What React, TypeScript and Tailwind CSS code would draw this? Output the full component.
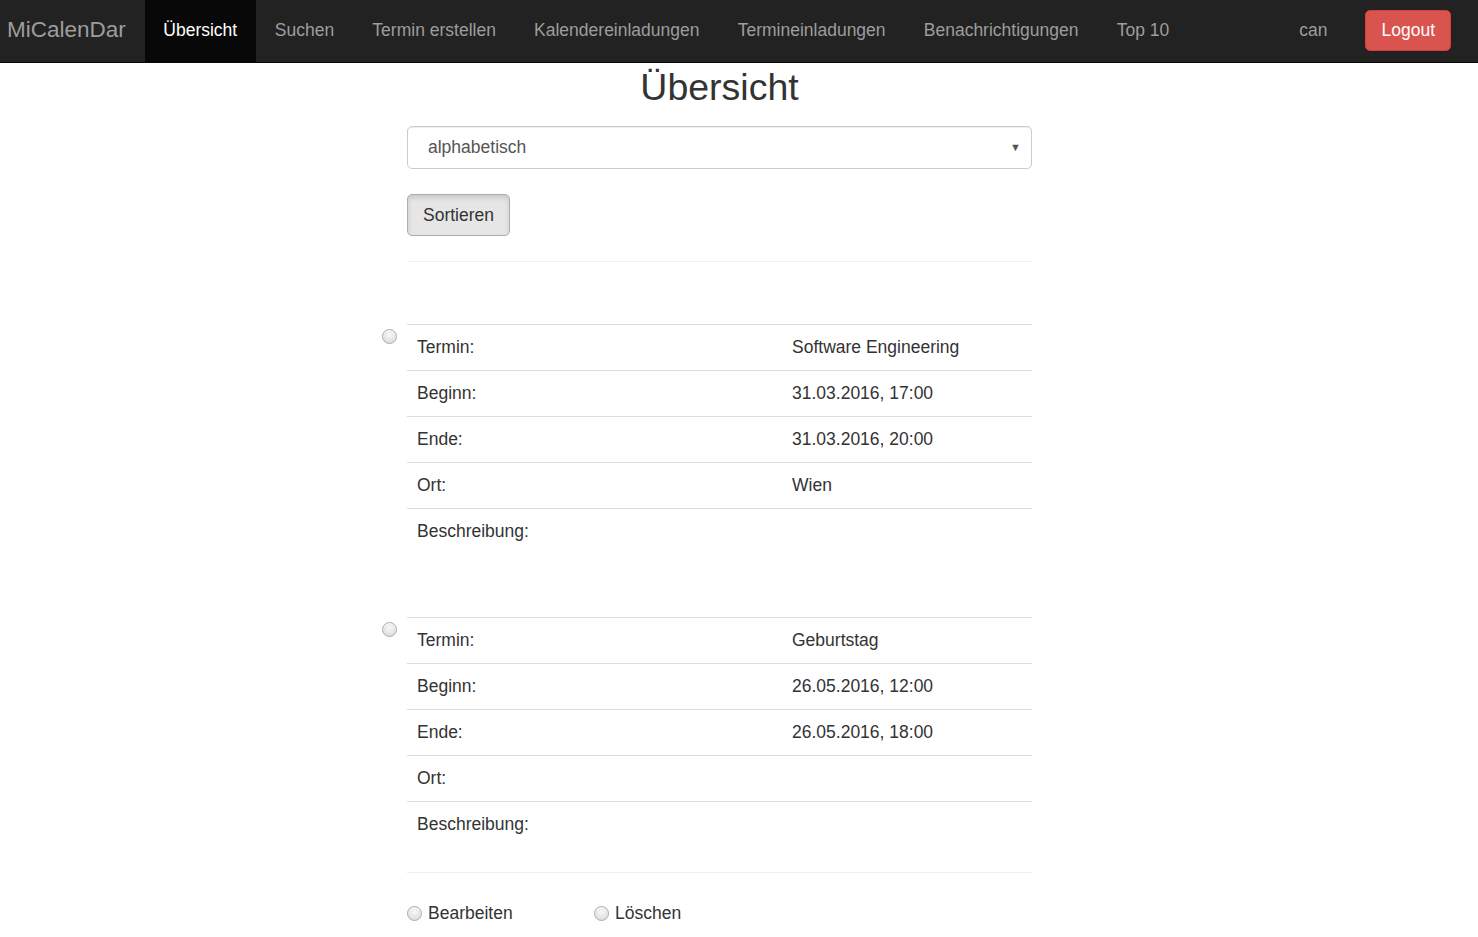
import React from "react";

const font = { fontFamily: '"Liberation Sans", Arial, Helvetica, sans-serif' };

function Radio() {
  return (
    <span className="block w-[15px] h-[15px] rounded-full border border-[#ababab] bg-[radial-gradient(circle_at_50%_35%,#f8f8f8,#d6d6d6)] shadow-[inset_0_1px_1px_rgba(255,255,255,0.8)]" />
  );
}

type Row = [string, string];

function Termin({ rows }: { rows: Row[] }) {
  return (
    <div className="relative">
      <div className="absolute left-[-25px] top-[5px] flex">
        <Radio />
      </div>
      <table className="w-full border-collapse">
        <tbody>
          {rows.map(([k, v], i) => (
            <tr key={i} className="border-t border-[#dddddd]">
              <td className="w-[375px] px-[10px] py-[10px] h-[46px] align-top leading-[25px]">{k}</td>
              <td className="px-[10px] py-[10px] align-top leading-[25px]">{v}</td>
            </tr>
          ))}
        </tbody>
      </table>
    </div>
  );
}

export default function App() {
  const nav = ["Suchen", "Termin erstellen", "Kalendereinladungen", "Termineinladungen", "Benachrichtigungen", "Top 10"];
  return (
    <div style={font} className="min-h-[937px] bg-white text-[#333333] text-[17.5px]">
      <nav className="h-[63px] bg-[#222222] border-b border-[#080808] flex items-stretch pb-[2px]">
        <div className="flex items-center pl-[7px] pr-[19px] text-[22.5px] text-[#9d9d9d]">MiCalenDar</div>
        <div className="flex items-stretch">
          <div className="flex items-center px-[18.5px] mb-[-2px] pb-[2px] bg-[#080808] text-white">Übersicht</div>
          {nav.map((n) => (
            <div key={n} className="flex items-center px-[19.1px] text-[#9d9d9d]">
              {n}
            </div>
          ))}
        </div>
        <div className="ml-auto flex items-center pr-[27px]">
          <span className="text-[#9d9d9d] mr-[38px]">can</span>
          <button className="h-[41px] px-[15px] rounded-[5px] bg-[#d9534f] border border-[#d43f3a] text-white">Logout</button>
        </div>
      </nav>

      <div className="ml-[407px] w-[625px]">
        <h1 className="text-center text-[37.5px] leading-[41.25px] text-[#333] mt-[4px] mb-0">Übersicht</h1>
        <div className="mt-[17.75px] h-[43px] border border-[#cccccc] rounded-[5px] flex items-center pl-[20px] pr-[10px] text-[#555555] shadow-[inset_0_1px_1px_rgba(0,0,0,0.075)]">
          <span className="flex-1">alphabetisch</span>
          <span className="text-[11px] text-[#555]">▼</span>
        </div>
        <button className="mt-[25px] h-[42px] px-[15px] rounded-[5px] bg-[#e6e6e6] border border-[#adadad] text-[#333] shadow-[inset_0_3px_5px_rgba(0,0,0,0.125)]">
          Sortieren
        </button>
        <div className="mt-[25px] border-t border-[#eeeeee]" />

        <div className="mt-[62px]">
          <Termin
            rows={[
              ["Termin:", "Software Engineering"],
              ["Beginn:", "31.03.2016, 17:00"],
              ["Ende:", "31.03.2016, 20:00"],
              ["Ort:", "Wien"],
              ["Beschreibung:", ""],
            ]}
          />
        </div>
        <div className="mt-[62px]">
          <Termin
            rows={[
              ["Termin:", "Geburtstag"],
              ["Beginn:", "26.05.2016, 12:00"],
              ["Ende:", "26.05.2016, 18:00"],
              ["Ort:", ""],
              ["Beschreibung:", ""],
            ]}
          />
        </div>
        <div className="mt-[25px] border-t border-[#eeeeee]" />
        <div className="mt-[27px] flex items-center">
          <div className="flex items-center w-[187px]">
            <Radio />
            <span className="ml-[6px]">Bearbeiten</span>
          </div>
          <div className="flex items-center">
            <Radio />
            <span className="ml-[6px]">Löschen</span>
          </div>
        </div>
      </div>
    </div>
  );
}
